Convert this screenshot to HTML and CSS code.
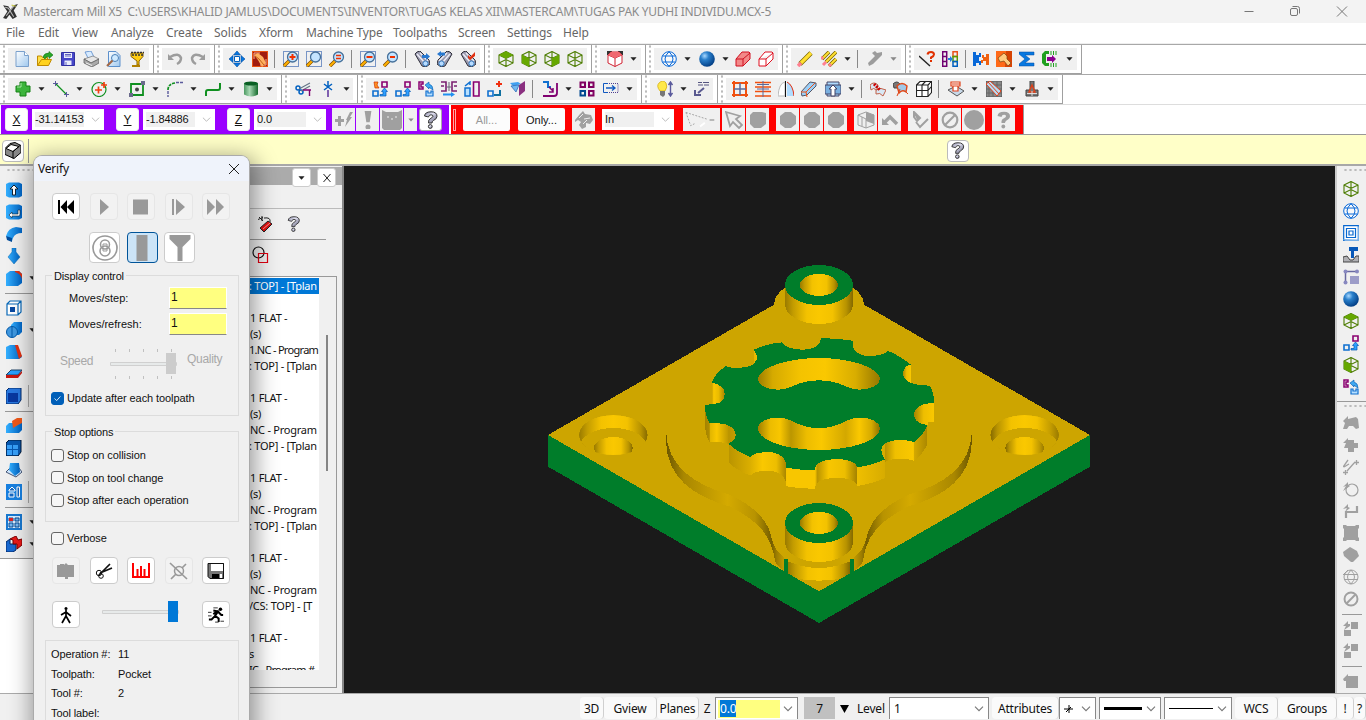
FILE: index.html
```html
<!DOCTYPE html>
<html lang="en">
<head>
<meta charset="utf-8">
<title>Mastercam Mill X5</title>
<link rel="stylesheet" href="styles.css">
</head>
<body>
<svg class="defs" aria-hidden="true">
<defs>
<linearGradient id="gDoc" x2="1" y2="1"><stop offset="0" stop-color="#fff"/><stop offset="1" stop-color="#9fc8ee"/></linearGradient>
<linearGradient id="gGreen"><stop offset="0" stop-color="#4c9a62"/><stop offset=".4" stop-color="#a8d8b4"/><stop offset="1" stop-color="#156b2c"/></linearGradient>
<radialGradient id="gBall" cx=".35" cy=".3" r=".75"><stop offset="0" stop-color="#a8d8ff"/><stop offset=".35" stop-color="#2a80cc"/><stop offset="1" stop-color="#003a80"/></radialGradient>
<linearGradient id="gBlue" x2="1"><stop offset="0" stop-color="#35b0ff"/><stop offset="1" stop-color="#0064c4"/></linearGradient>
<linearGradient id="gQ" x2="1" y2="1"><stop offset="0" stop-color="#777792"/><stop offset=".4" stop-color="#e4e4f4"/><stop offset="1" stop-color="#555570"/></linearGradient>
</defs>
<symbol id="logo" viewBox="0 0 16 16"><path d="M1 2l5 1 2 3 3-4 4-1-4 6 3 6-4 2-3-4-3 4-3-1 4-6z" fill="#333"/><path d="M3 4l3 1 5 8M11 3l-7 9" stroke="#bbb" fill="none"/><path d="M9 2l4 1" stroke="#cc5" fill="none"/></symbol>
<symbol id="new" viewBox="0 0 16 16"><path d="M2 .5h8.500l4 4v11H2z" fill="url(#gDoc)" stroke="#7aa0cc"/><path d="M10.500.5v4h4" fill="#fff" stroke="#7aa0cc"/></symbol>
<symbol id="open" viewBox="0 0 16 16"><path d="M.5 14.500V5h4l1 1.500h5V9" fill="#ffe04a" stroke="#c08a00"/><path d="M.5 14.500l4-6h10l-3 6z" fill="#ffd21e" stroke="#c08a00"/><path d="M6 6q1-4 6-4V.5l4 3.500-4 3.500V5.500Q9 5 8 8z" fill="#2aa82a" stroke="#107010" stroke-width=".6"/></symbol>
<symbol id="save" viewBox="0 0 16 16"><path d="M1.500 1.500h13v13h-13z" fill="#4646c8" stroke="#3030a0"/><path d="M4 2h8v5H4zM4.500 9.500h7V14h-7z" fill="#e8ecfa"/><path d="M5 3.500h6M5 5h6M6 11v3" stroke="#6464c0"/></symbol>
<symbol id="print" viewBox="0 0 16 16"><path d="M2 1l6-1 3 6-6 1z" fill="#d7ebff" stroke="#5588cc" stroke-width=".8"/><path d="M1 8l9-3 6 3-8 4z" fill="#e6e6e6" stroke="#777" stroke-width=".7"/><path d="M1 8v4l8 4 7-4V8l-8 4z" fill="#aaa" stroke="#555" stroke-width=".7"/><path d="M3 12l6 2.500" stroke="#eee"/></symbol>
<symbol id="preview" viewBox="0 0 16 16"><path d="M2.500.5H10l4 4v11H2.500z" fill="url(#gDoc)" stroke="#5c90cc"/><circle cx="9" cy="7" r="3.500" fill="#cfeaff" stroke="#4a80b8"/><path d="M6.500 9.500L1 15" stroke="#a06848" stroke-width="2.200"/></symbol>
<symbol id="cup" viewBox="0 0 16 16"><path d="M2 2h12v3.500L10 10v4H8v-4L2 5.500z" fill="#ffcc10" stroke="#8a6200"/><path d="M2 1.500h13M3 4h11" stroke="#333" stroke-width="1.300" stroke-dasharray="2 1"/><path d="M3 15h8" stroke="#b08000" stroke-width="2"/></symbol>
<symbol id="undo" viewBox="0 0 16 16"><path d="M1 3v6h6z" fill="#9c9c9c"/><path d="M3 6q9-5 11 1 0 4-4 6" fill="none" stroke="#9c9c9c" stroke-width="2.500"/></symbol>
<symbol id="redo" viewBox="0 0 16 16"><path d="M15 3v6H9z" fill="#9c9c9c"/><path d="M13 6Q4 1 2 7q0 4 4 6" fill="none" stroke="#9c9c9c" stroke-width="2.500"/></symbol>
<symbol id="pan" viewBox="0 0 16 16"><path d="M8 0l3.500 4h-7zM8 16l3.500-4h-7zM0 8l4-3.500v7zM16 8l-4-3.500v7z" fill="#0878e0" stroke="#004aa0" stroke-width=".6"/><path d="M5.500 5.500h5v5h-5z" fill="#fff" stroke="#0060c0"/></symbol>
<symbol id="repaint" viewBox="0 0 16 16"><path d="M0 0h16v16H0z" fill="#e85010"/><path d="M1 1h14v14H1z" fill="#a01c10"/><path d="M2 8V2h6M8 14h6V8" stroke="#ffb090" fill="none"/><path d="M2 4l4-2 5 4 3 6-4 4-4-7z" fill="#ffb060"/><path d="M3 5l4 3 5 6" stroke="#c06018" fill="none"/></symbol>
<symbol id="brush" viewBox="0 0 16 16"><path d="M0 0h16v16H0z" fill="#ff6a18"/><path d="M10 0h6v16H9z" fill="#d64404"/><path d="M2 7l6-5 3 3v3l4 4-3 3-4-5-4 1z" fill="#ffcc80" stroke="#7a4410" stroke-width=".7"/></symbol>
<symbol id="lens" viewBox="0 0 16 16"><path d="M6 10L1 15" stroke="#7a4a00" stroke-width="3.400"/><path d="M6 10L1 15" stroke="#ffb000" stroke-width="2.200"/><circle cx="9.500" cy="6" r="5" fill="#c4e4ff" stroke="#45709a" stroke-width="1.300"/></symbol>
<symbol id="zin" viewBox="0 0 16 16"><path d="M.5.5h15v15H.5z" fill="none" stroke="#003a9c" stroke-dasharray="1 1"/><use href="#lens"/><path d="M6.500 6h6M9.500 3v6" stroke="#f03000" stroke-width="2"/></symbol>
<symbol id="zwin" viewBox="0 0 16 16"><path d="M.5.5h15v15H.5z" fill="none" stroke="#003a9c" stroke-dasharray="1 1"/><use href="#lens"/></symbol>
<symbol id="zeq" viewBox="0 0 16 16"><use href="#lens"/><path d="M7 4.500h5M7 7.500h5" stroke="#f03000" stroke-width="1.600"/></symbol>
<symbol id="zout" viewBox="0 0 16 16"><path d="M.5.5h15v15H.5z" fill="none" stroke="#003a9c" stroke-dasharray="1 1"/><use href="#lens"/><path d="M6.500 6h6" stroke="#f03000" stroke-width="2"/></symbol>
<symbol id="zminus" viewBox="0 0 16 16"><use href="#lens"/><path d="M7 6h5" stroke="#f03000" stroke-width="2"/></symbol>
<symbol id="bino" viewBox="0 0 16 16"><path d="M1 3l2-2 3-1 9 9 1 4-4 3-4-1z" fill="#9a9aae" stroke="#30303c"/><path d="M3 3l8 9M6 2l8 8" stroke="#ececf6" stroke-width="1.500"/><circle cx="11.500" cy="12.500" r="2.600" fill="#b8dcff" stroke="#3377bb"/></symbol>
<symbol id="bino1" viewBox="0 0 16 16"><use href="#bino"/><path d="M8 4h4V2l4 3.500L12 9V7H8z" fill="#2878d0"/></symbol>
<symbol id="bino2" viewBox="0 0 16 16"><use href="#bino" transform="matrix(-1 0 0 1 16 0)"/><path d="M8 1.500H4V0L0 3l4 3V4.500h4z" fill="#2878d0"/></symbol>
<symbol id="bino3" viewBox="0 0 16 16"><use href="#bino"/><path d="M8 4l2 2 5-5v4l-5 4-2-2z" fill="#e03010"/></symbol>
<symbol id="cube" viewBox="0 0 16 16"><path d="M1 4l7-3.500L15 4v8l-7 3.500L1 12zM1 4l7 3.500L15 4M8 7.500v8M8 .5v8M1 12l7-3.500 7 3.500" fill="none" stroke="#4c7c00" stroke-width="1.100"/></symbol>
<symbol id="cubeT" viewBox="0 0 16 16"><use href="#cube"/><path d="M1 4l7-3.500L15 4 8 7.500z" fill="#66a800"/></symbol>
<symbol id="cubeF" viewBox="0 0 16 16"><use href="#cube"/><path d="M1 4l7 3.500v8L1 12z" fill="#66a800"/></symbol>
<symbol id="cubeR" viewBox="0 0 16 16"><use href="#cube"/><path d="M15 4L8 7.500v8l7-3.500z" fill="#66a800"/></symbol>
<symbol id="redcube" viewBox="0 0 16 16"><path d="M0 0h5v4H0zM11 0h5v4h-5z" fill="#333"/><path d="M1 4l3-3h8l3 3v8l-7 3.500L1 12zM1 4l7 3 7-3M8 7v8.500" fill="#fff" stroke="#d02030"/><path d="M1 4l3-3h8l3 3-7 3z" fill="#f06870"/></symbol>
<symbol id="globe" viewBox="0 0 16 16"><circle cx="8" cy="8" r="7.300" fill="#fff" fill-opacity=".6"/><path d="M8 .7a7.300 7.300 0 100 14.600A7.300 7.300 0 008 .7zM8 .7q-8 7.300 0 14.600M8 .7q8 7.300 0 14.600M1.500 5h13M1.500 11h13" fill="none" stroke="#0868d8"/></symbol>
<symbol id="ball" viewBox="0 0 16 16"><circle cx="8" cy="8" r="7.800" fill="url(#gBall)"/></symbol>
<symbol id="rsolid" viewBox="0 0 16 16"><path d="M1 8l6-7h7l1 1v6l-7 7H1z" fill="#f28888" stroke="#d01020"/><path d="M1 8h7l7-6M8 8v7" stroke="#d01020" fill="none"/></symbol>
<symbol id="rwire" viewBox="0 0 16 16"><path d="M1 8l6-7h7l1 1v6l-7 7H1zM1 8h7l7-6M8 8v7" fill="#fff" stroke="#e01020"/></symbol>
<symbol id="pencil" viewBox="0 0 16 16"><path d="M3 13L14 2" stroke="#7a6400" stroke-width="4.600"/><path d="M4 12L14 2" stroke="#ffe030" stroke-width="3.200"/><path d="M1 15l3-3" stroke="#ff8090" stroke-width="3.600"/></symbol>
<symbol id="pencils" viewBox="0 0 16 16"><path d="M1 8l7-7M5 11L15 1M8 15l7-7" stroke="#7a6400" stroke-width="3.600"/><path d="M1 8l7-7M5 11L15 1M8 15l7-7" stroke="#ffe030" stroke-width="2"/><path d="M0 8l2-2M2 14l3-3M8 15l2-2" stroke="#ff8090" stroke-width="3"/></symbol>
<symbol id="gpen" viewBox="0 0 16 16"><path d="M1 12l7-7-3-3 3-2 2 2 5-1v3l-9 9-4 2z" fill="#9c9c9c"/></symbol>
<symbol id="anaq" viewBox="0 0 16 16"><path d="M0 5l11 10" stroke="#222" stroke-width="1.400"/><path d="M8.500 3.500Q9 1 12 1t3 2.500q0 1.500-3 3V8M12 9v2" fill="none" stroke="#e03000" stroke-width="2"/></symbol>
<symbol id="film" viewBox="0 0 16 16"><path d="M.7.7h4v14.600h-4zM.7 5.500h4M.7 10.500h4" fill="none" stroke="#700070" stroke-width="1.500"/><path d="M11 .7h4.300V5.500H11z" fill="none" stroke="#e85018" stroke-width="1.500"/><path d="M11 5.500h4.300v5H11z" fill="none" stroke="#5a9a00" stroke-width="1.500"/><path d="M11 10.500h4.300v4.800H11z" fill="none" stroke="#0060c0" stroke-width="1.500"/><path d="M6 7h2V5l3 3-3 3V9H6z" fill="#2080e0"/></symbol>
<symbol id="mach" viewBox="0 0 16 16"><path d="M0 1h3v3h3V2h2v4H6v4h2v4H6v-2H3v3H0z" fill="#0868d8"/><path d="M13 3h3v11h-3v-4h-3v2H8V9h2V7H9V4h2v2h2z" fill="#f06010"/></symbol>
<symbol id="sum" viewBox="0 0 16 16"><path d="M0 1h15v3H6l5 4-5 4h9v3H0v-2l6-5-6-5z" fill="#0878e0" stroke="#0048a0" stroke-width=".5"/></symbol>
<symbol id="outp" viewBox="0 0 16 16"><path d="M7 0H3L0 3v9l3 3h4v-3H4V3h3z" fill="#20a020"/><path d="M5 6h5V4l4 4-4 4v-2H5z" fill="#8a0090"/><path d="M9 0v4M11.500 0v4M14 0v4M9 12v4M11.500 12v4M14 12v4" stroke="#20a020"/></symbol>
<symbol id="plus" viewBox="0 0 16 16"><path d="M5 1h6v4h4v6h-4v4H5v-4H1V5h4z" fill="#3cb43c" stroke="#158015"/><path d="M6 2v4H2" stroke="#a4e8a0" fill="none"/></symbol>
<symbol id="line" viewBox="0 0 16 16"><path d="M3 3l10 10" stroke="#109020" stroke-width="1.300"/><path d="M0 2.500h5M2.500 0v5M11 13.500h5M13.500 11v5" stroke="#5a5a9c"/></symbol>
<symbol id="arc" viewBox="0 0 16 16"><circle cx="8" cy="8.500" r="7" fill="none" stroke="#109020" stroke-width="1.200"/><path d="M4 9h7M7.500 5.500v7M10 4h6M13 1v6" stroke="#f04010" stroke-width="1.700"/></symbol>
<symbol id="rect" viewBox="0 0 16 16"><path d="M2 3h12v11H2z" fill="none" stroke="#109020" stroke-width="1.800"/><path d="M0 12h4v4H0zM12 0h4v4h-4z" fill="#6a6a8c"/><circle cx="8" cy="8.500" r="2" fill="#444"/></symbol>
<symbol id="fillet" viewBox="0 0 16 16"><path d="M1 9q0-6 7-7" fill="none" stroke="#109020" stroke-width="1.700" stroke-dasharray="3 1"/><path d="M1 10v6M9 1.500h7" stroke="#5a5a9c" stroke-width="1.400" stroke-dasharray="3 1"/></symbol>
<symbol id="spline" viewBox="0 0 16 16"><path d="M1 15v-4q0-2 2-2h10q2 0 2-2V2" fill="none" stroke="#109020" stroke-width="2"/></symbol>
<symbol id="cyl" viewBox="0 0 16 16"><path d="M1 2.500v11q7 4 14 0v-11z" fill="url(#gGreen)"/><ellipse cx="8" cy="2.500" rx="7" ry="2" fill="#0a6024"/></symbol>
<symbol id="trim" viewBox="0 0 16 16"><circle cx="3" cy="7" r="2" fill="none" stroke="#0060c0" stroke-width="1.500"/><circle cx="6" cy="11" r="2" fill="none" stroke="#0060c0" stroke-width="1.500"/><path d="M4 8l11-6M6 10l9-5" stroke="#678" stroke-width="1.200"/><path d="M8 9h8M14.500 9v6" stroke="#800070" stroke-width="1.400"/></symbol>
<symbol id="brk" viewBox="0 0 16 16"><path d="M8 0v6M4 3l8 6M12 3L4 9" stroke="#0060c0" stroke-width="1.500"/><path d="M8 9v7" stroke="#8060b0" stroke-width="2"/></symbol>
<symbol id="xf1" viewBox="0 0 16 16"><path d="M10 1h5v5h-5z" fill="none" stroke="#8a0070" stroke-width="1.600"/><path d="M1 10h5v5H1z" fill="none" stroke="#1070d0" stroke-width="1.600"/><path d="M8 13.500h3v-3H9.500l3-3.500 3 3.500H14V15H8z" fill="#30a0ff" stroke="#0058b0" stroke-width=".7"/></symbol>
<symbol id="xf0" viewBox="0 0 16 16"><use href="#xf1"/><path d="M2 1l4 0-1 3 2 3H3z" fill="#ff9020" stroke="#d03000" stroke-width=".7"/></symbol>
<symbol id="xrot" viewBox="0 0 16 16"><path d="M1 1h4v2H3v3h2v2H1z" fill="none" stroke="#8a0070" stroke-width="1.500"/><path d="M8 10v5h7v-5h-2v2h-3v-2z" fill="#b8e0ff" stroke="#1070d0" stroke-width="1.200"/><path d="M7 4l4-3v2q4 1 4 6l-3-2-1-1v2z" fill="#40a8f0" stroke="#0058b0" stroke-width=".6"/></symbol>
<symbol id="xmir" viewBox="0 0 16 16"><path d="M0 1h5v9H0M3 5H0M16 1h-5v9h5M13 5h3" fill="none" stroke="#7a2070" stroke-width="1.600"/><path d="M8 1v9M6 6h4" stroke="#667"/><path d="M2 12.500h8V11l4 2.500-4 2.500v-1.500H2z" fill="#2090f0"/></symbol>
<symbol id="xscl" viewBox="0 0 16 16"><path d="M9.500 1H15v14H9.500z" fill="none" stroke="#8a0070" stroke-width="1.600"/><path d="M1 7h5v8H1zM1 5l5-4v3" fill="#b8e0ff" stroke="#1070d0" stroke-width="1.500"/></symbol>
<symbol id="xoff" viewBox="0 0 16 16"><path d="M1 10h5v5H1z" fill="none" stroke="#1070d0" stroke-width="1.600"/><path d="M9 3h6M12 0v6" stroke="#f03010" stroke-width="2"/><path d="M7 14h6V9" fill="none" stroke="#1070a0" stroke-width="2"/></symbol>
<symbol id="xprj" viewBox="0 0 16 16"><path d="M0 2l8-1 3 2-8 2z" fill="#40a0f0"/><path d="M1 5l8-1-3 7z" fill="#70b8f0" stroke="#2060b0" stroke-width=".7"/><path d="M9 4l6-4v10l-6 5z" fill="#8a3080"/></symbol>
<symbol id="xroll" viewBox="0 0 16 16"><path d="M1 1h5v5h3" fill="none" stroke="#1070d0" stroke-width="2"/><path d="M15 2v10q0 3-3 3H1" fill="none" stroke="#800070" stroke-width="1.800"/><path d="M7 6l4 4M7 11h4V7" stroke="#800070" stroke-width="1.500" fill="none"/></symbol>
<symbol id="nest" viewBox="0 0 16 16"><path d="M1.500 1.500H6V6H1.500zM10 1.500h4.500V6H10zM10 10h4.500v4.500H10z" fill="none" stroke="#800060" stroke-width="2"/><path d="M1.500 10H6v4.500H1.500z" fill="none" stroke="#004890" stroke-width="2"/></symbol>
<symbol id="stretch" viewBox="0 0 16 16"><path d="M5 2.500H.5v9H5" fill="none" stroke="#1058c0"/><path d="M6 2.500h9v9H6" fill="none" stroke="#504090" stroke-dasharray="1 1"/><path d="M3 7h8M9 4.500L12 7 9 9.500" fill="none" stroke="#1058c0" stroke-width="1.300"/></symbol>
<symbol id="bulb" viewBox="0 0 16 16"><path d="M3 10Q-1 5 2 2q4-4 7 0 2 4-1 8z" fill="#ffe94a" stroke="#d0a800" stroke-width=".7"/><path d="M3 10h5v4l-2 2-3-2z" fill="#777"/><path d="M13.500 2v12M11.500 4l2-3 2 3M11.500 12l2 3 2-3" stroke="#5a5a9c" fill="none" stroke-width="1.400"/></symbol>
<symbol id="note" viewBox="0 0 16 16"><path d="M5 1.500h4M10 1.500h6M5 4h5M11 4h5" stroke="#555580" stroke-width="1.200"/><path d="M11 7l-6 5M2 9v5h6" fill="none" stroke="#5a5a90" stroke-width="2"/></symbol>
<symbol id="grid1" viewBox="0 0 16 16"><path d="M2 0v16M14 0v16M0 2h16M0 14h16" stroke="#f05010" stroke-width="2"/><path d="M8 2v12M2 8h12" stroke="#5a6a9c" stroke-width="1.500"/></symbol>
<symbol id="grid2" viewBox="0 0 16 16"><path d="M0 1.500h16M0 6h16M0 10.500h16M0 15h16" stroke="#f05010" stroke-width="1.500"/><path d="M8 0v16M2 3.500h12M2 8h12" stroke="#5a6a9c"/></symbol>
<symbol id="rev" viewBox="0 0 16 16"><path d="M0 15Q1 2 7 1v14z" fill="#fff" stroke="#bbb"/><path d="M7.500 0v16" stroke="#111"/><path d="M9 1q6 3 7 14H9z" fill="#b0dcff"/><path d="M9 1q6 3 7 14" fill="none" stroke="#e03010"/></symbol>
<symbol id="sweep" viewBox="0 0 16 16"><path d="M0 11L9 1l6 1v3l-9 9-5 1z" fill="#9cd0f8" stroke="#556"/><path d="M0 11l5 0 1 5M5 11l9-9" fill="none" stroke="#f05010"/></symbol>
<symbol id="draft" viewBox="0 0 16 16"><path d="M2 1h12v14H2z" fill="#b0dcff" stroke="#446"/><path d="M0 4h16v9H0z" fill="#7ab0e0" stroke="#446"/><path d="M8 4l4 4h-2v7H6V8H4z" fill="#fff" stroke="#446"/></symbol>
<symbol id="s1" viewBox="0 0 16 16"><path d="M0 4q4-4 8 0l-1 5q-4-3-6 0zM6 9q5-3 10 0l-3 6q-3-4-7-2z" fill="#d8e8f4" stroke="#c06048"/><path d="M4 3l6 6" stroke="#c00" stroke-width="3" stroke-dasharray="2 1"/></symbol>
<symbol id="s2" viewBox="0 0 16 16"><path d="M0 3q4-4 7 0l-1 4H1z" fill="#777" stroke="#444"/><path d="M4 5q5-5 10 0l-1 6q-4-3-7 1z" fill="#a0c8e8" stroke="#e04818" stroke-width="1.400"/><path d="M12 10l3 3M4 15l3-7" stroke="#e04818"/></symbol>
<symbol id="s3" viewBox="0 0 16 16"><path d="M.5 4L4 .5h11.500v11L12 15.500H.5zM.5 4H12v11.500M12 4L15.500.5M.5 9.500H12l3.500-4M6 4v11.500M6 4L9.500.5" fill="#fff" stroke="#222" stroke-width="1.100"/></symbol>
<symbol id="s4" viewBox="0 0 16 16"><path d="M0 9l8-4 8 5-7 5z" fill="#c8d8e8" stroke="#555"/><path d="M3 1h9v4H3zM5 5v5h5V5M4 3h8" fill="#fff" stroke="#e04018" stroke-width="1.200"/></symbol>
<symbol id="s5" viewBox="0 0 16 16"><path d="M0 0h16v16H0z" fill="#8a8a8a" stroke="#555"/><path d="M3 0v16M7 0v16M11 0v16M0 4h16M0 8h16M0 12h16" stroke="#666"/><path d="M0 3l4-3 11 10-4 5z" fill="#b8dcf4" stroke="#e04018"/><path d="M2 1l11 12" stroke="#e04018"/></symbol>
<symbol id="s6" viewBox="0 0 16 16"><path d="M6 0h4v9h4v6H2V9h4z" fill="#777" stroke="#444"/><path d="M5 11l3-7 3 7z" fill="none" stroke="#e04018" stroke-width="1.400"/><path d="M3 12.500h10M8 10v5" stroke="#ddd"/></symbol>
<symbol id="gflash" viewBox="0 0 18 16"><path d="M0 7h3V4h3v3h3v3H6v4H3v-4H0zM11 8l4-8h3l-3 5h2l-7 10 2-7z" fill="#a0a0a0"/></symbol>
<symbol id="gex" viewBox="0 0 16 16"><path d="M5 0h6L9.500 10h-3zM8 12a2 2 0 100 4.500A2 2 0 008 12z" fill="#a0a0a0"/></symbol>
<symbol id="gtv" viewBox="0 0 20 18"><path d="M0 -1l4 2h12l4-2v18l-2 2H2l-2-2z" fill="#a0a0a0"/><path d="M5 6h2M9 8h2M13 6h2" stroke="#eee"/></symbol>
<symbol id="q" viewBox="0 0 16 18"><path d="M1.500 5Q2 .8 8 .8t6 4.500q0 2.500-3.500 4.200-1.500 1-1.500 2.500H5.500Q5 8.500 8 7.200q2-1 2-2 0-1.400-2-1.400-2.200 0-2.500 2.200z" fill="url(#gQ)" stroke="#333" stroke-width="1"/><circle cx="7.300" cy="15.500" r="1.900" fill="url(#gQ)" stroke="#333" stroke-width="1"/></symbol>
<symbol id="gqm" viewBox="0 0 16 18"><path d="M1.500 5Q2 .8 8 .8t6 4.500q0 2.500-3.500 4.200-1.500 1-1.500 2.500H5.500Q5 8.500 8 7.200q2-1 2-2 0-1.400-2-1.400-2.200 0-2.500 2.200z" fill="#a0a0a0"/><circle cx="7.300" cy="15.500" r="1.900" fill="#a0a0a0"/></symbol>
<symbol id="gchain" viewBox="0 0 18 18"><path d="M0 9l5-6 3-3 2 3 6 1 2 5-3 4-4-1 0 4-4 2-3-4 2-3-3-2-3 2z" fill="#a0a0a0"/><path d="M4 7l4-4M9 8l6-1M8 13l4-4" stroke="#eee"/></symbol>
<symbol id="gdash" viewBox="0 0 36 18"><path d="M1 1l22 7M1 1l5 14 4-2" fill="none" stroke="#a0a0a0" stroke-dasharray="2 1.500"/><path d="M16 16l5-4" stroke="#fff" stroke-width="2"/><path d="M26 9h5" stroke="#a0a0a0" stroke-width="1.500"/></symbol>
<symbol id="gcur" viewBox="0 0 18 18"><path d="M1 1l14 4-4 3 6 6-3 3-6-6-3 4z" fill="#eee" stroke="#a0a0a0" stroke-width="1.800"/></symbol>
<symbol id="gblob" viewBox="0 0 18 18"><path d="M1 4l3-3h9l4 1v11l-5 4H5l-4-4z" fill="#a0a0a0"/></symbol>
<symbol id="ghex" viewBox="0 0 18 18"><path d="M1 5l5-4h6l5 4v8l-5 4H6l-5-4z" fill="#a0a0a0"/></symbol>
<symbol id="gcube2" viewBox="0 0 18 18"><path d="M1 4l8-3 8 3v10l-8 3-8-3zM1 4l8 4 8-4M9 8v9M5 6v9" fill="#eee" stroke="#a0a0a0"/><path d="M9 1l8 3v9l-8-3z" fill="#a0a0a0"/></symbol>
<symbol id="garr" viewBox="0 0 18 18"><path d="M4 11l5-5 7 7" fill="none" stroke="#a0a0a0" stroke-width="3.500"/><path d="M1 7v7h7z" fill="#a0a0a0"/></symbol>
<symbol id="gchk" viewBox="0 0 18 18"><path d="M3 1l4 7M3 1v5l3 4 3-3zM5 11l4 5 8-8" fill="none" stroke="#a0a0a0" stroke-width="2"/></symbol>
<symbol id="gno" viewBox="0 0 18 18"><circle cx="9" cy="9" r="7.300" fill="none" stroke="#a0a0a0" stroke-width="2.200"/><path d="M14 4L4 14" stroke="#a0a0a0" stroke-width="2.200"/></symbol>
<symbol id="gdot" viewBox="0 0 18 18"><circle cx="9" cy="9" r="9" fill="#a0a0a0"/></symbol>
<symbol id="bcube" viewBox="0 0 16 16"><path d="M0 6l5-5 5-1 6 3v7l-7 6-9-4z" fill="#888" stroke="#000"/><path d="M1 6l5-4 8 2-6 5z" fill="#fff" stroke="#000"/><path d="M8 9v7M8 9l7-6" stroke="#000"/></symbol>
<symbol id="v1" viewBox="0 0 16 16"><path d="M0 2l3-1.500h10l3 1.500v12l-3 1.500H3L0 14z" fill="url(#gBlue)"/><path d="M8 3l4 4h-2.500v6h-3V7H4z" fill="#fff" stroke="#123"/></symbol>
<symbol id="v2" viewBox="0 0 16 16"><path d="M0 2l3-1.500h10l3 1.500v12l-3 1.500H3L0 14z" fill="url(#gBlue)"/><path d="M12 6v4H6V8l-3 3 3 3v-2h7q1 0 1-2V6z" fill="#fff" stroke="#123" stroke-width=".6"/></symbol>
<symbol id="v3" viewBox="0 0 16 16"><path d="M0 10Q2 2 10 1l6 1v5q-7 0-9 5l-1 3z" fill="url(#gBlue)"/><path d="M0 10l6 2v4l-5-2z" fill="#004c9c"/></symbol>
<symbol id="v4" viewBox="0 0 16 16"><path d="M6 0h4v4l4 5-6 7-6-7 4-5z" fill="url(#gBlue)" stroke="#0868b0" stroke-width=".5"/></symbol>
<symbol id="v5" viewBox="0 0 16 16"><path d="M0 4l4-3h9l3 3v9l-4 3H0z" fill="url(#gBlue)"/><path d="M9 1h4l3 3v5q-1-5-7-7z" fill="#e03010"/></symbol>
<symbol id="v6" viewBox="0 0 16 16"><path d="M1 4l3-3h11v11l-3 3H1zM1 4h11v11M12 4l3-3" fill="#fff" stroke="#0868b8" stroke-width="1.200"/><path d="M4 7h5v5H4z" fill="#0848a0"/></symbol>
<symbol id="v7" viewBox="0 0 16 16"><path d="M5 3l3-3h8v10l-3 3H5z" fill="url(#gBlue)"/><circle cx="6" cy="10" r="5.500" fill="#4098e0" stroke="#0058a8"/><path d="M6 5v10" stroke="#0058a8"/></symbol>
<symbol id="v8" viewBox="0 0 16 16"><path d="M0 3l4-2h6l6 12-3 2H0z" fill="url(#gBlue)"/><path d="M9 1h3l4 11-3 3z" fill="#e03010"/></symbol>
<symbol id="v9" viewBox="0 0 16 16"><path d="M0 9l5-5h11l-4 5z" fill="#28a0ff" stroke="#246"/><path d="M0 9h12l4-4v2l-4 5H0z" fill="#c81810"/></symbol>
<symbol id="v10" viewBox="0 0 16 16"><path d="M0 3l3-3h12v12l-3 4H0z" fill="#2878e0" stroke="#002868"/><path d="M2 5h10v9H2z" fill="#0838a0"/></symbol>
<symbol id="v11" viewBox="0 0 16 16"><path d="M0 8l3-3h13v7l-3 3H0z" fill="url(#gBlue)"/><path d="M6 3l5-3h5v5l-4 2-5 3z" fill="#f05818"/></symbol>
<symbol id="v12" viewBox="0 0 16 16"><path d="M0 3l3-3h12v12l-3 4H0z" fill="#0858b0" stroke="#001838"/><path d="M1 5h5v4H1zM7 5h5v4H7zM1 10h5v5H1zM7 10h5v5H7z" fill="#38a0f8"/></symbol>
<symbol id="v13" viewBox="0 0 16 16"><path d="M0 10l4-4h9l3 4-6 5z" fill="#cfe8ff" stroke="#457"/><path d="M4 1h9l1 9-5 4-6-6z" fill="url(#gBlue)"/></symbol>
<symbol id="v14" viewBox="0 0 16 16"><path d="M0 0h16v16H0z" fill="#1880e0"/><path d="M3 6l3-3 3 3v1H3zM3 9h5v4H3zM11 3h2.500v10H11z" fill="#1868c0" stroke="#fff"/></symbol>
<symbol id="v15" viewBox="0 0 16 16"><path d="M1 1h14v14H1z" fill="#d8ecff" stroke="#1878d0" stroke-width="2"/><path d="M3 4h4v3H3zM9 4h4v3H9zM3 9h4v4H3zM9 9h4v4H9z" fill="#78b8f0" stroke="#064a90"/><path d="M3 4h4v3H3z" fill="#e02020"/></symbol>
<symbol id="v16" viewBox="0 0 16 16"><path d="M0 6l4-3v5h6v6l-3 2H0z" fill="#1868d0" stroke="#002868"/><path d="M4 3l6-3 2 4 4-1v6l-5 4V8H7V4z" fill="#e81818" stroke="#700"/></symbol>
<symbol id="conc" viewBox="0 0 16 16"><path d="M.7.7h14.600v14.600H.7zM3.500 3.500h9v9h-9zM6 6h4v4H6z" fill="#fff" stroke="#0868d0" stroke-width="1.200"/><path d="M0 14l2 2h14V2l-1-1v14z" fill="#78b0e8"/></symbol>
<symbol id="tool" viewBox="0 0 16 16"><path d="M6 0h9v4h-4v7H8V4H6z" fill="#0858b8"/><path d="M0 10l4-1 3 4h3l3-4h3v6H0z" fill="#b0b0b4" stroke="#444"/></symbol>
<symbol id="net" viewBox="0 0 16 16"><path d="M2.500 2v12M2 2.500h12" stroke="#6868a0" stroke-width="1.500"/><circle cx="2.500" cy="2.500" r="2" fill="#8888c0"/><circle cx="2.500" cy="13.500" r="2" fill="#8888c0"/><circle cx="14" cy="2.500" r="2" fill="#8888c0"/><path d="M7 7h9v8H7z" fill="#9c9cc8"/></symbol>
<symbol id="r1" viewBox="0 0 16 16"><path d="M0 6l5-5v3l4-1 4-1 2 2 1 9-3 1-3-3-4 0-2 3-4 0 2-6z" fill="#a0a0a0"/></symbol>
<symbol id="r2" viewBox="0 0 16 16"><path d="M0 6l5-5v2h6v3h4v5h-4v4H5v-4H1l2-5z" fill="#a0a0a0"/></symbol>
<symbol id="r3" viewBox="0 0 16 16"><path d="M0 8l5-7M1 8l5-3M4 12l8-9M11 3.500h5M13.500 1v5M0 13.500h5M2.500 11v5" stroke="#a0a0a0" stroke-width="1.300"/></symbol>
<symbol id="r4" viewBox="0 0 16 16"><circle cx="9" cy="9" r="6" fill="none" stroke="#a0a0a0" stroke-width="1.200"/><path d="M0 6l5-5v3l2 1-7 5 3-5z" fill="#a0a0a0"/></symbol>
<symbol id="r5" viewBox="0 0 16 16"><path d="M3 15V9h11V3" fill="none" stroke="#a0a0a0" stroke-width="2.200"/><path d="M0 6l5-5v3l2 1-5 4 2-4z" fill="#a0a0a0"/></symbol>
<symbol id="r6" viewBox="0 0 16 16"><path d="M0 0h3l1 1h8l1-1h3v3l-1 1v8l1 1v3h-3l-1-1H4l-1 1H0v-3l1-1V4L0 3z" fill="#a0a0a0"/></symbol>
<symbol id="r7" viewBox="0 0 16 16"><path d="M0 5l7-5 7 4 2 5-6 6H8L1 9z" fill="#a0a0a0"/></symbol>
<symbol id="r8" viewBox="0 0 16 16"><path d="M8 1a7 7 0 100 14A7 7 0 008 1zM8 1q-7 7 0 14M8 1q7 7 0 14M1 5.500h14M1 10.500h14M0 6l5-5" fill="none" stroke="#a0a0a0"/></symbol>
<symbol id="r10" viewBox="0 0 16 16"><path d="M8 1h7v7H8zM1 9h7v6H1zM0 5l5-5v3h2v2L1 9l2-4z" fill="#a0a0a0"/></symbol>
<symbol id="r11" viewBox="0 0 16 16"><path d="M0 6l5-5v2h10v12H3V8H1z" fill="#a0a0a0"/></symbol>
<symbol id="dn" viewBox="0 0 8 4"><path d="M.5 0h7L4 4z" fill="#222"/></symbol>
<symbol id="chev" viewBox="0 0 10 6"><path d="M1 .7l4 4 4-4" fill="none" stroke="currentColor" stroke-width="1.100"/></symbol>
</svg>

<header class="titlebar"><svg class="i"><use href="#logo"/></svg><span class="title">Mastercam Mill X5&nbsp; C:\USERS\KHALID JAMLUS\DOCUMENTS\INVENTOR\TUGAS KELAS XII\MASTERCAM\TUGAS PAK YUDHI INDIVIDU.MCX-5</span>
<svg class="winctl" viewBox="0 0 104 12"><path d="M.5 6.500h9M93 1.500l10 10M103 1.500l-10 10" fill="none" stroke="#777"/><rect x="46.500" y="3.500" width="7" height="7" rx="1.500" fill="none" stroke="#777"/><path d="M48.500 1.500h5q2 0 2 2v5" fill="none" stroke="#777"/></svg></header>
<nav class="menu"><span>File</span><span>Edit</span><span>View</span><span>Analyze</span><span>Create</span><span>Solids</span><span>Xform</span><span>Machine Type</span><span>Toolpaths</span><span>Screen</span><span>Settings</span><span>Help</span></nav>

<div class="row">
<div class="tb"><svg class="i"><use href="#new"/></svg><svg class="i"><use href="#open"/></svg><svg class="i"><use href="#save"/></svg><svg class="i"><use href="#print"/></svg><svg class="i"><use href="#preview"/></svg><svg class="i"><use href="#cup"/></svg></div>
<div class="tb"><svg class="i"><use href="#undo"/></svg><svg class="i"><use href="#redo"/></svg></div>
<div class="tb"><svg class="i"><use href="#pan"/></svg><svg class="i"><use href="#repaint"/></svg><i class="sep"></i><svg class="i"><use href="#zin"/></svg><svg class="i"><use href="#zwin"/></svg><svg class="i"><use href="#zeq"/></svg><i class="sep"></i><svg class="i"><use href="#zout"/></svg><svg class="i"><use href="#zminus"/></svg><i class="sep"></i><svg class="i"><use href="#bino1"/></svg><svg class="i"><use href="#bino2"/></svg><svg class="i"><use href="#bino3"/></svg></div>
<div class="tb"><svg class="i"><use href="#cubeT"/></svg><svg class="i"><use href="#cubeF"/></svg><svg class="i"><use href="#cubeR"/></svg><svg class="i"><use href="#cube"/></svg></div>
<div class="tb"><span class="dd"><svg class="i"><use href="#redcube"/></svg><svg class="dn"><use href="#dn"/></svg></span></div>
<div class="tb"><span class="dd"><svg class="i"><use href="#globe"/></svg><svg class="dn"><use href="#dn"/></svg></span><span class="dd"><svg class="i"><use href="#ball"/></svg><svg class="dn"><use href="#dn"/></svg></span><svg class="i"><use href="#rsolid"/></svg><svg class="i"><use href="#rwire"/></svg></div>
<div class="tb"><svg class="i"><use href="#pencil"/></svg><span class="dd"><svg class="i"><use href="#pencils"/></svg><svg class="dn"><use href="#dn"/></svg></span><i class="sep"></i><span class="dd off"><svg class="i"><use href="#gpen"/></svg><svg class="dn"><use href="#dn"/></svg></span></div>
<div class="tb last"><svg class="i"><use href="#anaq"/></svg><svg class="i"><use href="#film"/></svg><i class="sep"></i><svg class="i"><use href="#mach"/></svg><svg class="i"><use href="#brush"/></svg><svg class="i"><use href="#sum"/></svg><svg class="i"><use href="#outp"/></svg><svg class="dn solo"><use href="#dn"/></svg></div>
</div>
<div class="row">
<div class="tb"><span class="dd"><svg class="i"><use href="#plus"/></svg><svg class="dn"><use href="#dn"/></svg></span><span class="dd"><svg class="i"><use href="#line"/></svg><svg class="dn"><use href="#dn"/></svg></span><span class="dd"><svg class="i"><use href="#arc"/></svg><svg class="dn"><use href="#dn"/></svg></span><span class="dd"><svg class="i"><use href="#rect"/></svg><svg class="dn"><use href="#dn"/></svg></span><span class="dd"><svg class="i"><use href="#fillet"/></svg><svg class="dn"><use href="#dn"/></svg></span><span class="dd"><svg class="i"><use href="#spline"/></svg><svg class="dn"><use href="#dn"/></svg></span><span class="dd"><svg class="i"><use href="#cyl"/></svg><svg class="dn"><use href="#dn"/></svg></span></div>
<div class="tb"><svg class="i"><use href="#trim"/></svg><span class="dd"><svg class="i"><use href="#brk"/></svg><svg class="dn"><use href="#dn"/></svg></span></div>
<div class="tb"><svg class="i"><use href="#xf0"/></svg><svg class="i"><use href="#xf1"/></svg><svg class="i"><use href="#xrot"/></svg><svg class="i"><use href="#xmir"/></svg><svg class="i"><use href="#xscl"/></svg><svg class="i"><use href="#xoff"/></svg><svg class="i"><use href="#xprj"/></svg><i class="sep"></i><span class="dd"><svg class="i"><use href="#xroll"/></svg><svg class="dn"><use href="#dn"/></svg></span><svg class="i"><use href="#nest"/></svg><span class="dd"><svg class="i"><use href="#stretch"/></svg><svg class="dn"><use href="#dn"/></svg></span></div>
<div class="tb"><span class="dd"><svg class="i"><use href="#bulb"/></svg><svg class="dn"><use href="#dn"/></svg></span><svg class="i"><use href="#note"/></svg></div>
<div class="tb last"><svg class="i"><use href="#grid1"/></svg><svg class="i"><use href="#grid2"/></svg><svg class="i"><use href="#rev"/></svg><svg class="i"><use href="#sweep"/></svg><span class="dd"><svg class="i"><use href="#draft"/></svg><svg class="dn"><use href="#dn"/></svg></span><i class="sep"></i><svg class="i"><use href="#s1"/></svg><svg class="i"><use href="#s2"/></svg><svg class="i"><use href="#s3"/></svg><i class="sep"></i><span class="dd"><svg class="i"><use href="#s4"/></svg><svg class="dn"><use href="#dn"/></svg></span><span class="dd"><svg class="i"><use href="#s5"/></svg><svg class="dn"><use href="#dn"/></svg></span><span class="dd"><svg class="i"><use href="#s6"/></svg><svg class="dn"><use href="#dn"/></svg></span></div>
</div>
<div class="row coords">
<div class="purple"><b class="key">X</b><span class="combo"><em>-31.14153</em><svg><use href="#chev"/></svg></span><b class="key gap">Y</b><span class="combo"><em>-1.84886</em><svg><use href="#chev"/></svg></span><b class="key gap">Z</b><span class="combo"><em>0.0</em><svg><use href="#chev"/></svg></span><span class="gb g6"><svg><use href="#gflash"/></svg></span><span class="gb"><svg><use href="#gex"/></svg></span><span class="gb"><svg class="tv"><use href="#gtv"/></svg></span><span class="gb thin"><svg class="dn"><use href="#dn"/></svg></span><span class="gb lit"><svg><use href="#q"/></svg></span></div>
<div class="redbar"><i class="rgrip"></i><span class="word dim">All...</span><span class="word">Only...</span><span class="gb"><svg><use href="#gchain"/></svg></span><span class="combo"><em>In</em><svg><use href="#chev"/></svg></span><span class="gb wide"><svg><use href="#gdash"/></svg></span><span class="gb near"><svg><use href="#gcur"/></svg></span><span class="gb"><svg><use href="#gblob"/></svg></span><span class="gb g6"><svg><use href="#ghex"/></svg></span><span class="gb"><svg><use href="#ghex"/></svg></span><span class="gb"><svg><use href="#ghex"/></svg></span><span class="gb g6"><svg><use href="#gcube2"/></svg></span><span class="gb"><svg><use href="#garr"/></svg></span><span class="gb g6"><svg><use href="#gchk"/></svg></span><span class="gb g6"><svg><use href="#gno"/></svg></span><span class="gb"><svg class="tv"><use href="#gdot"/></svg></span><span class="gb g6"><svg><use href="#gqm"/></svg></span></div>
</div>
<div class="ribbon"><span class="rb"><svg class="i"><use href="#bcube"/></svg></span><i></i><span class="rb help"><svg class="i"><use href="#q"/></svg></span></div>

<main class="work">
<aside class="left"><div class="dots"></div>
<svg class="i"><use href="#v1"/></svg><svg class="i"><use href="#v2"/></svg><svg class="i"><use href="#v3"/></svg><svg class="i"><use href="#v4"/></svg><span class="vd"><svg class="i"><use href="#v5"/></svg><svg class="dn"><use href="#dn"/></svg></span><hr>
<svg class="i"><use href="#v6"/></svg><span class="vd"><svg class="i"><use href="#v7"/></svg><svg class="dn"><use href="#dn"/></svg></span><svg class="i"><use href="#v8"/></svg><svg class="i"><use href="#v9"/></svg><span class="vd bar"><svg class="i"><use href="#v10"/></svg></span><hr>
<svg class="i"><use href="#v11"/></svg><svg class="i"><use href="#v12"/></svg><svg class="i"><use href="#v13"/></svg><span class="vd bar"><svg class="i"><use href="#v14"/></svg></span><hr>
<span class="vd"><svg class="i"><use href="#v15"/></svg><svg class="dn"><use href="#dn"/></svg></span><span class="vd"><svg class="i"><use href="#v16"/></svg><svg class="dn"><use href="#dn"/></svg></span><hr class="end"><div class="blank"></div>
</aside>
<section class="ops">
<div class="ophead"><span class="ob"><svg class="dn"><use href="#dn"/></svg></span><span class="ob x"><svg viewBox="0 0 8 8"><path d="M.5 0l7 8M7.500 0l-7 8" stroke="#222"/></svg></span></div>
<div class="optools"><svg class="i" viewBox="0 0 16 16"><path d="M2 12l8-7 4 3-8 8z" fill="#e01010" stroke="#222"/><path d="M12 6q1-5-6-4M1 1l4 4M4 0v5M0 3.500l5-2" stroke="#222" fill="none"/><path d="M5 13l7-6" stroke="#ff9090"/></svg><svg class="i"><use href="#q"/></svg></div>
<div class="optools2"><svg class="i" viewBox="0 0 16 16"><circle cx="6.500" cy="5.500" r="5.500" fill="none" stroke="#111" stroke-width="1.200"/><path d="M6.500 6.500h9v9h-9z" fill="none" stroke="#e00010" stroke-width="1.200"/></svg></div>
<div class="treebox"><div class="tree"><p class="sel">: TOP] - [Tplan</p><p></p><p class="in">1 FLAT -</p><p class="in">(s)</p><p class="tight">1.NC - Program</p><p>: TOP] - [Tplan</p><p></p><p class="in">1 FLAT -</p><p class="in">(s)</p><p class="in">NC - Program</p><p>: TOP] - [Tplan</p><p></p><p class="in">1 FLAT -</p><p class="in">(s)</p><p class="in">NC - Program</p><p>: TOP] - [Tplan</p><p></p><p class="in">1 FLAT -</p><p class="in">(s)</p><p class="in">NC - Program</p><p>/CS: TOP] - [T</p><p></p><p class="in">1 FLAT -</p><p>s</p><p class="tight">IC - Program #</p></div><div class="scroll"><i></i></div></div>
</section>
<section class="view">
<svg viewBox="344 166 992 527" shape-rendering="crispEdges">
<defs>
<linearGradient id="w"><stop offset="0" stop-color="#997a00"/><stop offset=".12" stop-color="#c39c00"/><stop offset=".32" stop-color="#f3c200"/><stop offset=".5" stop-color="#fac800"/><stop offset=".7" stop-color="#f3c200"/><stop offset=".9" stop-color="#b89300"/><stop offset="1" stop-color="#846900"/></linearGradient>
<linearGradient id="wr"><stop offset="0" stop-color="#a08000"/><stop offset=".5" stop-color="#eebe00"/><stop offset="1" stop-color="#fac800"/></linearGradient>
<linearGradient id="wl"><stop offset="0" stop-color="#c09800"/><stop offset=".15" stop-color="#fac800"/><stop offset=".5" stop-color="#eabb00"/><stop offset="1" stop-color="#a08000"/></linearGradient>
<linearGradient id="gw" gradientUnits="userSpaceOnUse" x1="526" y1="0" x2="1212" y2="0"><stop offset="0" stop-color="#a48300"/><stop offset=".018" stop-color="#b08d00"/><stop offset=".019" stop-color="#e0b400"/><stop offset=".05" stop-color="#fac800"/><stop offset=".1" stop-color="#c09900"/><stop offset=".102" stop-color="#b99400"/><stop offset=".196" stop-color="#daae00"/><stop offset=".198" stop-color="#dcb000"/><stop offset=".25" stop-color="#fac800"/><stop offset=".31" stop-color="#edbe00"/><stop offset=".353" stop-color="#a88600"/><stop offset=".355" stop-color="#f8c600"/><stop offset=".48" stop-color="#f8c600"/><stop offset=".49" stop-color="#bb9500"/><stop offset=".54" stop-color="#f8c600"/><stop offset=".61" stop-color="#edbe00"/><stop offset=".662" stop-color="#a58400"/><stop offset=".664" stop-color="#efbf00"/><stop offset=".785" stop-color="#d7ac00"/><stop offset=".787" stop-color="#b89300"/><stop offset=".83" stop-color="#efbf00"/><stop offset=".91" stop-color="#fac800"/><stop offset=".913" stop-color="#d4a900"/><stop offset="1" stop-color="#967700"/></linearGradient>
<linearGradient id="sw" gradientUnits="userSpaceOnUse" x1="408" y1="0" x2="764" y2="0"><stop offset="0" stop-color="#6a5500"/><stop offset=".15" stop-color="#a98700"/><stop offset=".52" stop-color="#d4aa00"/><stop offset=".75" stop-color="#b89300"/><stop offset=".89" stop-color="#755e00"/><stop offset=".93" stop-color="#9b7c00"/><stop offset="1" stop-color="#c69e00"/></linearGradient>
<linearGradient id="slot" gradientUnits="userSpaceOnUse" x1="684" y1="0" x2="1050" y2="0"><stop offset="0" stop-color="#9d7e00"/><stop offset=".12" stop-color="#d5aa00"/><stop offset=".35" stop-color="#f4c300"/><stop offset=".55" stop-color="#fac800"/><stop offset=".8" stop-color="#d8ad00"/><stop offset="1" stop-color="#967800"/></linearGradient>
<linearGradient id="slot2" gradientUnits="userSpaceOnUse" x1="684" y1="0" x2="1050" y2="0"><stop offset="0" stop-color="#a08000"/><stop offset=".1" stop-color="#ecbc00"/><stop offset=".18" stop-color="#f8c600"/><stop offset=".27" stop-color="#bb9600"/><stop offset=".4" stop-color="#edbd00"/><stop offset=".52" stop-color="#fac800"/><stop offset=".72" stop-color="#d3a800"/><stop offset=".83" stop-color="#fac800"/><stop offset=".93" stop-color="#d5aa00"/><stop offset="1" stop-color="#8d7000"/></linearGradient>
<clipPath id="bore"><ellipse cx="250" cy="555" rx="103" ry="60"/></clipPath>
<path id="gear" d="M873 265Q868 299 815 299Q767 297 757 277Q710 280 670 300Q682 310 680 328Q672 354 627 353Q600 355 588 348Q555 370 545 398Q583 405 584 430Q584 462 545 462L526 466Q524 495 539 520Q616 516 617 556Q616 571 595 581Q622 606 661 621Q672 606 720 606Q769 612 769 653Q812 661 855 660Q855 630 920 627Q979 630 981 652Q1030 645 1065 628Q1030 575 1107 570Q1135 570 1152 576Q1180 555 1193 525Q1152 520 1152 492Q1158 460 1212 459Q1213 425 1198 407Q1120 405 1119 370Q1121 347 1143 344Q1110 318 1075 303Q1055 318 1015 318Q965 315 968 272Q920 264 873 265Z"/>
<g id="boss"><path d="M765 106v57a102 59 0 00204 0v-57z" fill="url(#w)"/><ellipse cx="867" cy="105" rx="102" ry="60" fill="#007d2a"/><ellipse cx="867" cy="105" rx="57" ry="33" fill="url(#w)"/></g>
<g id="side"><g clip-path="url(#bore)"><ellipse cx="250" cy="555" rx="103" ry="60" fill="url(#w)"/><ellipse cx="250" cy="594" rx="103" ry="60" fill="#cda500"/><ellipse cx="250" cy="594" rx="58" ry="33" fill="url(#w)"/></g><path d="M408 543C412 650 490 702 600 735C680 772 715 815 725 865Q732 900 762 921V963Q738 944 735 932C725 860 690 815 600 770C490 738 412 685 408 575Z" fill="url(#sw)"/></g>
</defs>
<g transform="translate(530 250) scale(.33333)">
<path d="M54 555L867 1024L1680 555V650L867 1119L54 650Z" fill="#007d2a"/>
<ellipse cx="867" cy="164" rx="135" ry="78" fill="#cda500"/>
<path d="M54 555L732 164H1002L1680 555L867 1024Z" fill="#cda500"/>
<use href="#boss"/>
<use href="#side"/><use href="#side" transform="matrix(-1 0 0 1 1734 0)"/>
<g fill="url(#gw)"><use href="#gear" y="56"/><use href="#gear" y="53"/><use href="#gear" y="50"/><use href="#gear" y="47"/><use href="#gear" y="44"/><use href="#gear" y="41"/><use href="#gear" y="38"/><use href="#gear" y="35"/><use href="#gear" y="32"/><use href="#gear" y="29"/><use href="#gear" y="26"/><use href="#gear" y="23"/><use href="#gear" y="20"/><use href="#gear" y="17"/><use href="#gear" y="14"/><use href="#gear" y="11"/><use href="#gear" y="8"/><use href="#gear" y="5"/><use href="#gear" y="2"/></g>
<path d="M1150 492Q1158 458 1212 459V515H1193V526Q1150 520 1150 492Z" fill="url(#wr)"/>
<path d="M1143 344Q1119 347 1117 370Q1120 392 1143 401Z" fill="url(#wr)"/>
<path d="M545 398Q586 405 586 430Q586 463 545 462Z" fill="url(#wl)"/>
<use href="#gear" fill="#007d2a"/>
<path d="M684 385C690 350 780 324 867 324S1044 350 1050 385C1052 405 1020 419 990 419C945 419 935 391 867 391S789 419 744 419C714 419 682 405 684 385Z" fill="url(#slot)"/>
<path d="M684 535C684 515 714 503 744 503C790 503 800 534 867 534S944 503 990 503C1020 503 1050 515 1050 535C1050 575 954 600 867 600S684 575 684 535Z" fill="url(#slot2)"/>
<path d="M774 934Q867 974 960 934V970L933 986Q867 998 801 986L774 970Z" fill="url(#w)"/>
<path d="M762 927h12v45l-12-8zM960 927h12v37l-12 8z" fill="#007d2a"/>
<use href="#boss" y="714"/>
</g></svg></section>
<aside class="right"><div class="dots"></div><svg class="i"><use href="#cube"/></svg><svg class="i"><use href="#globe"/></svg><svg class="i"><use href="#conc"/></svg><svg class="i"><use href="#tool"/></svg><svg class="i"><use href="#net"/></svg><svg class="i"><use href="#ball"/></svg><svg class="i"><use href="#cubeT"/></svg><svg class="i"><use href="#xf1"/></svg><svg class="i"><use href="#cubeF"/></svg><svg class="i"><use href="#xrot"/></svg><hr class="full"><div class="dots short"></div><svg class="i"><use href="#r1"/></svg><svg class="i"><use href="#r2"/></svg><svg class="i"><use href="#r3"/></svg><svg class="i"><use href="#r4"/></svg><svg class="i"><use href="#r5"/></svg><svg class="i"><use href="#r6"/></svg><svg class="i"><use href="#r7"/></svg><svg class="i"><use href="#r8"/></svg><svg class="i"><use href="#gno"/></svg><hr><svg class="i"><use href="#r10"/></svg><svg class="i"><use href="#r10"/></svg><hr><svg class="i"><use href="#r11"/></svg></aside>
</main>

<footer class="status"><span></span><span class="pill">3D</span><span class="pill">Gview</span><span class="pill">Planes</span><span>Z</span><span class="sbox yel"><mark>0.0</mark><svg><use href="#chev"/></svg></span><span class="seven">7</span><span class="down"><svg viewBox="0 0 10 10"><path d="M0 1h10L5 10z"/></svg></span><span class="lev">Level</span><span class="sbox"><em>1</em><svg><use href="#chev"/></svg></span><span class="pill">Attributes</span><span class="sbox"><svg class="star" viewBox="0 0 10 10"><path d="M0 5h9M5 1v8M2 8l5-5" stroke="#000" fill="none"/></svg><svg><use href="#chev"/></svg></span><span class="sbox"><i class="thick"></i><svg><use href="#chev"/></svg></span><span class="sbox"><i class="fine"></i><svg><use href="#chev"/></svg></span><span class="pill">WCS</span><span class="pill">Groups</span><span class="pill">!</span><span class="pill">?</span></footer>

<section class="dialog">
<div class="dhead"><span>Verify</span><svg viewBox="0 0 10 10"><path d="M0 0l10 10M10 0L0 10" stroke="#222"/></svg></div>
<div class="btns b1"><span class="btn"><svg viewBox="0 0 18 16"><path d="M1 1h2v14H1zM10 1v14L3.500 8zM17 1v14L10 8z"/></svg></span><span class="btn no"><svg viewBox="0 0 18 16"><path d="M5 0l9 8-9 8z"/></svg></span><span class="btn no"><svg viewBox="0 0 18 16"><path d="M1 .5h15v15H1z"/></svg></span><span class="btn no"><svg viewBox="0 0 18 16"><path d="M2 0h2v16H2zM6 0l9 8-9 8z"/></svg></span><span class="btn no"><svg viewBox="0 0 18 16"><path d="M0 0l8 8-8 8zM9 0l8 8-8 8z"/></svg></span></div>
<div class="btns b2"><span class="btn"><svg viewBox="0 0 28 28"><circle cx="14" cy="14" r="12" fill="none" stroke="#999" stroke-width="1.700"/><circle cx="14" cy="10.500" r="4.500" fill="none" stroke="#999" stroke-width="1.500"/><circle cx="14" cy="17" r="5" fill="none" stroke="#999" stroke-width="1.500"/><path d="M12 10h4v7h-4z" fill="none" stroke="#999"/></svg></span><span class="btn on"><svg viewBox="0 0 28 28"><path d="M8.500 1h11v26h-11z" fill="#999"/></svg></span><span class="btn"><svg viewBox="0 0 28 28"><path d="M3.500 1h21v4l-8 8v14h-5V13l-8-8z" fill="#999"/></svg></span></div>
<div class="group g1"><span class="legend">Display control</span><div class="fld"><span>Moves/step:</span><span class="inp">1</span></div><div class="fld"><span>Moves/refresh:</span><span class="inp">1</span></div>
<div class="speed"><span>Speed</span><svg viewBox="0 0 72 32"><path d="M5.500 1v3M19.500 1v3M33.500 1v3M47.500 1v3M61.500 1v3M5.500 28v3M19.500 28v3M33.500 28v3M47.500 28v3M61.500 28v3" stroke="#c0c0c0"/><path d="M.5 14.500h66v3H.5z" fill="#e7eaea" stroke="#d0d0d0"/><path d="M56 5h10v21H56z" fill="#ccc"/></svg><span class="ql">Quality</span></div>
<div class="chk"><i class="c on"><svg viewBox="0 0 8 6"><path d="M.5 3L3 5.500 7.500.5" fill="none" stroke="#fff"/></svg></i>Update after each toolpath</div></div>
<div class="group g2"><span class="legend">Stop options</span><div class="chk"><i class="c"></i>Stop on collision</div><div class="chk"><i class="c"></i>Stop on tool change</div><div class="chk"><i class="c"></i>Stop after each operation</div></div>
<div class="chk verb"><i class="c"></i>Verbose</div>
<div class="btns b3"><span class="btn no"><svg viewBox="0 0 18 16"><path d="M0 2h3V1h4v1l2-2 2 2h6v12h-6v2H8v-2H0z"/></svg></span><span class="btn"><svg viewBox="0 0 18 16"><circle cx="4" cy="10" r="2.700" fill="none" stroke="#111"/><circle cx="6" cy="13" r="2.300" fill="none" stroke="#111"/><path d="M4 12L15 1M5 10l12-5" stroke="#111" stroke-width="1.700"/></svg></span><span class="btn"><svg viewBox="0 0 18 16"><path d="M1 0v14h16V0M5.500 14V6M9 14V3M12.500 14V6" fill="none" stroke="#f00" stroke-width="2"/></svg></span><span class="btn no"><svg viewBox="0 0 18 16"><path d="M0 0l17 16M1 16l5-5M12 5l4-4" stroke="#999" stroke-width="1.700"/><circle cx="9" cy="8" r="4.500" fill="none" stroke="#999" stroke-width="1.500"/></svg></span><span class="btn"><svg viewBox="0 0 18 16"><path d="M1 0h16v16H3l-2-2z" fill="#777"/><path d="M4 1h12v7H4zM13 11h2v4h-2z" fill="#fff"/><path d="M1 .5h15.500v15H3l-2-2z" fill="none" stroke="#111"/><path d="M5 11h7v4H5z"/></svg></span></div>
<div class="btns b4"><span class="btn"><svg viewBox="0 0 18 16"><circle cx="9" cy="1.500" r="1.500"/><path d="M9 3v7M4 8l5-3 5 4M9 9l-4 7M9 9l4 7" fill="none" stroke="#000" stroke-width="1.700"/></svg></span><svg class="slide" viewBox="0 0 78 23"><path d="M.5 9.500h76v3H.5z" fill="#e7eaea" stroke="#d0d0d0"/><path d="M66 0h10v21H66z" fill="#0078d7"/></svg><span class="btn"><svg viewBox="0 0 18 18"><circle cx="14" cy="2.500" r="2"/><path d="M12 4L8 10l4 3v4M8 10l-4 4H1M6 4l5 1 4 4h2M10 5L6 8" fill="none" stroke="#000" stroke-width="2.200"/><path d="M6 1h5M0 6h4M0 10h4M8 17h4M14 16h4" stroke="#222"/></svg></span></div>
<div class="group g3"><p><span>Operation #:</span>11</p><p><span>Toolpath:</span>Pocket</p><p><span>Tool #:</span>2</p><p><span>Tool label:</span></p></div>
</section>
</body>
</html>
```
FILE: styles.css
```css
* { box-sizing: border-box; }
body { margin: 0; width: 1366px; height: 720px; overflow: hidden; display: flex; flex-direction: column; background: #fff; color: #111; font: 12px "Noto Sans", sans-serif; position: relative; }
.defs { position: absolute; width: 0; height: 0; }
svg { display: block; overflow: visible; flex: none; }
em { font-style: normal; }
p { margin: 0; }
.i { width: 16px; height: 16px; }
.off .dn { opacity: .5; }

.titlebar { height: 23px; flex: none; background: #f3f3f3; display: flex; align-items: center; padding-left: 2px; color: #8b8b8b; }
.title { margin-left: 4px; letter-spacing: -.26px; width: 1000px; white-space: nowrap; }
.titlebar .i { width: 17px; height: 17px; }
.winctl { width: 104px; height: 12px; margin-left: auto; margin-right: 18px; margin-top: -2px; }
.menu { height: 21px; flex: none; display: grid; grid-template-columns: 32px 34px 39px 55px 48px 45px 47px 87px 65px 49px 56px auto; padding: 0 0 1px 6px; align-items: center; color: #666; border-bottom: 1px solid #eee; letter-spacing: -.1px; white-space: nowrap; }

.row { height: 30px; flex: none; display: flex; border-top: 1px solid #a8a8a8; background: #fff; }
.tb { display: flex; align-items: center; padding: 0 4.500px 0 10px; border-right: 1px solid #a0a0a0; border-bottom: 1px solid #a0a0a0; background: radial-gradient(circle, #bbb 1px, transparent 1.300px) 2px 4px / 4px 5px, linear-gradient(#f0f0f0, #f0f0f0) 8px 3px / calc(100% - 12px) 22px, #fff; background-repeat: repeat-y, no-repeat; }
.tb .i { margin: 0 3.500px; }
.dd { display: flex; align-items: center; width: 38px; }
.tb .dd .i { margin: 0 2px 0 5px; }
.dn { width: 7px; height: 4px; }
.dd .dn { margin-left: 5px; }
.solo { margin: 0 4px; }
.sep { width: 1px; height: 18px; margin: 0 4px 0 3px; background: #888; }

.coords { height: 31px; border-top: 1px solid #ddd; border-bottom: 1px solid #999; padding-left: 1px; font-family: "Liberation Sans", sans-serif; }
.purple, .redbar { display: flex; align-items: center; background: #9a00ff; }
.purple { width: 448px; padding-left: 4px; }
.redbar { width: 573px; margin-left: 2px; padding-left: 2px; background: #f00; border-right: 1px solid #999; }
.key { width: 23px; height: 23px; background: #fff; border: 1px solid #eee; border-radius: 3px; display: grid; place-items: center; font-weight: 400; font-size: 12px; text-decoration: underline; margin-right: 4px; }
.key.gap { margin-left: 12px; }
.combo { width: 72px; height: 21px; background: #fff; display: flex; align-items: center; justify-content: space-between; padding: 0 4px 0 3px; font-size: 11px; letter-spacing: -.1px; color: #111; flex: none; }
.combo em { background: #f0f0f0; width: 49px; height: 15px; line-height: 15px; }
.combo svg { width: 9px; height: 5.500px; color: #bbb; }
.gb { width: 23px; height: 23px; margin-right: 1px; background: #f0f0f0; display: grid; place-items: center; flex: none; }
.gb svg { width: 18px; height: 18px; }
.gb svg.dn { width: 6px; height: 4px; opacity: .5; }
.gb svg.tv { width: 20px; height: 20px; }
.g6 { margin-left: 6px; }
.thin { width: 13px; margin-right: 2px; }
.lit { background: #fff; border: 1px solid #aaa; border-radius: 3px; }
.rgrip { width: 3px; height: 22px; border: 1px solid #faa; margin-right: 7px; flex: none; }
.word { width: 47px; height: 23px; background: #fcfcfc; border-radius: 2px; display: grid; place-items: center; margin-right: 8px; font-size: 11px; flex: none; }
.word + .gb { margin: 0 7px 0 -1px; }
.dim { color: #999; }
.wide { width: 37px; margin-left: 9px; }
.wide svg { width: 34px; }
.near { margin-left: 1px; }

.ribbon { height: 31px; flex: none; background: #ffffc8; border-bottom: 2px solid #a8a8a8; display: flex; align-items: center; padding: 2px 0 0 2px; }
.rb { width: 22px; height: 22px; background: #fff; border: 1px solid #bbb; border-radius: 4px; display: grid; place-items: center; }
.ribbon i { width: 1px; height: 24px; background: #999; margin: 0 0 0 4px; }
.help { margin-left: 918px; }
.rb svg.i { width: 16px; height: 17px; }

.work { display: flex; flex: none; height: 527px; }
.left { width: 34px; flex: none; background: #f0f0f0; padding-left: 6px; display: flex; flex-direction: column; overflow: hidden; }
.left > .i, .right > .i { margin: 3px 0; flex: none; }
.dots { height: 13px; flex: none; background: radial-gradient(circle, #bbb 1px, transparent 1.300px) 0 2px / 5px 4px repeat-x; }
.vd { display: flex; align-items: center; height: 22px; flex: none; gap: 7px; }
.bar { border-right: 1px solid #aaa; width: 23px; }
hr { width: 100%; height: 1px; border: 0; background: #999; margin: 4px 0 3px -1px; flex: none; }
hr.end { width: 40px; margin: 3px 0 0 -6px; }
.blank { flex: 1; background: #fff; margin-left: -6px; }
.ops { width: 310px; flex: none; background: #f0f0f0; border-right: 2px solid #888; padding-left: 214px; }
.ophead { height: 43px; display: flex; align-items: flex-start; background: linear-gradient(#ababab, #ababab) 0 1px / 94px 18px no-repeat; padding: 2px 0 0 44px; border-bottom: 1px solid #bbb; width: 94px; }
.ob { width: 19px; height: 19px; background: #fff; border: 1px solid #ccc; border-radius: 3px; display: grid; place-items: center; flex: none; }
.ob.x { margin-left: 6px; }
.ob.x svg { width: 8px; height: 8px; }
.optools { height: 31px; width: 78px; border-bottom: 1px solid #999; display: flex; align-items: center; gap: 12px; padding-left: 10px; }
.optools2 { height: 36px; padding: 7px 0 0 4px; }
.treebox { height: 412px; width: 89px; border: 1px solid #999; border-left: 0; display: flex; }
.tree { width: 71px; height: 393px; overflow: hidden; background: #fff; padding-top: 1px; font-size: 11px; letter-spacing: -.25px; }
.tree p { height: 16px; line-height: 16px; white-space: nowrap; padding-left: 1px; }
.tree p.in { padding-left: 2px; }
.tree p.tight { letter-spacing: -.7px; }
.tree p.sel { background: #0078d7; color: #fff; }
.scroll { width: 17px; padding: 58px 0 0 7px; }
.scroll i { display: block; width: 2px; height: 136px; background: #858585; }
.view { width: 991px; flex: none; background: #1a1a1a; }
.view svg { width: 992px; height: 527px; overflow: hidden; }
.right { width: 31px; flex: none; background: #f0f0f0; border-left: 2px solid #ccc; padding-left: 6px; display: flex; flex-direction: column; }
.right .dots { height: 12px; }
.right .dots.short { height: 10px; }
.right hr { width: 20px; margin: 4px 0 3px -1px; }
.right hr.full { width: 29px; margin: 3px 0 0 -6px; }

.status { height: 27px; flex: none; background: #f0f0f0; display: grid; grid-template-columns: 579px 24px 53px 42px 16px 86px 35px 17px 36px 103px 67px 40px 65px 71px 43px 59px 17px 12px; align-items: center; padding: 2px 0 0 1px; border-top: 1px solid #aaa; white-space: nowrap; letter-spacing: -.2px; }
.status > span { height: 22px; display: flex; align-items: center; justify-content: center; }
.pill { background: #fafafa; border-radius: 4px; border-right: 1px solid #d0d0d0; }
.sbox { background: #fff; border: 1px solid #888; border-bottom: 0; padding: 0 4px; margin: 0 3px 0 0; }
.status > .sbox { justify-content: space-between; }
.status > .lev { justify-content: flex-start; padding-left: 4px; }
.sbox svg { width: 10px; height: 6px; color: #777; }
.sbox svg.star { width: 10px; height: 10px; }
.sbox.yel { background: linear-gradient(#ffff80, #ffff80) 2px 2px / 62px 18px no-repeat, #fff; }
mark { background: #0078d7; color: #fff; }
.seven { background: #c0c0c0; margin: 0 1px 0 3px; }
.down svg { width: 9px; height: 9px; }
.thick { width: 38px; height: 3px; background: #000; }
.fine { width: 44px; height: 1px; background: #000; }

.dialog { position: absolute; left: 34px; top: 156px; width: 215px; height: 580px; background: #f0f0f0; border-radius: 8px 8px 0 0; overflow: hidden; box-shadow: 0 0 0 1px #aaa, 2px 6px 22px 5px rgba(0, 0, 0, .38); font: 11px "Liberation Sans", sans-serif; }
.dhead { height: 25px; background: #eff3fb; display: flex; align-items: center; justify-content: space-between; padding: 0 10px 0 4px; font: 12px "Noto Sans", sans-serif; letter-spacing: -.2px; }
.dhead svg { width: 10px; height: 10px; }
.btns { display: flex; gap: 9.500px; padding-left: 18px; }
.btn { width: 28px; height: 27px; background: #fff; border: 1px solid #ccc; border-radius: 4px; display: grid; place-items: center; }
.btn svg { width: 18px; height: 16px; }
.btn.no { background: #f2f2f2; border-color: #e6e6e6; fill: #999; }
.b1, .b2 { margin-top: 12px; }
.b2 { padding-left: 55px; gap: 6.500px; }
.b2 .btn { width: 31px; height: 31px; }
.b2 svg { width: 28px; height: 28px; }
.btn.on { background: #cce4f7; border-color: #005499; }
.group { margin-left: 11px; width: 194px; border: 1px solid #dcdcdc; }
.legend { display: block; width: max-content; margin: -7px 0 0 6px; padding: 0 2px; background: #f0f0f0; height: 14px; line-height: 14px; letter-spacing: -.15px; }
.g1 { margin-top: 12px; height: 141px; }
.fld { display: flex; justify-content: space-between; align-items: center; height: 22px; margin: 4px 11px 0 23px; }
.fld + .fld { margin-top: 4px; }
.inp { width: 58px; height: 22px; background: #ffff80; border: 1px solid #fff; border-bottom: 1px solid #888; padding: 2px 1px; font-size: 12px; }
.speed { display: flex; color: #a8a8a8; margin: 13px 0 0 14px; align-items: center; height: 32px; font-size: 12px; letter-spacing: -.3px; }
.speed span:first-child { width: 50px; margin-top: -6px; }
.speed svg { width: 72px; height: 32px; }
.ql { margin: -10px 0 0 5px; }
.chk { display: flex; align-items: center; height: 14px; padding-left: 5px; white-space: nowrap; letter-spacing: -.08px; }
.c { width: 13px; height: 13px; border: 1px solid #666; border-radius: 3px; background: #f6f6f6; margin-right: 3px; display: grid; place-items: center; }
.c.on { background: #005fb8; border-color: #005fb8; }
.c svg { width: 7px; height: 5px; }
.g1 .chk { margin-top: 11px; }
.g2 { margin-top: 15px; height: 91px; }
.g2 .chk { margin-top: 8.500px; }
.g2 .legend + .chk { margin-top: 9px; }
.verb { margin: 9px 0 0 12px; }
.b3 { margin-top: 12px; }
.b4 { margin-top: 17px; gap: 0; }
.slide { width: 78px; height: 23px; margin: 0 22px; }
.g3 { margin-top: 12px; height: 120px; padding: 3px 0 0 5px; }
.g3 p { height: 19.600px; line-height: 20px; display: flex; letter-spacing: -.1px; }
.g3 span { width: 67px; }
```
